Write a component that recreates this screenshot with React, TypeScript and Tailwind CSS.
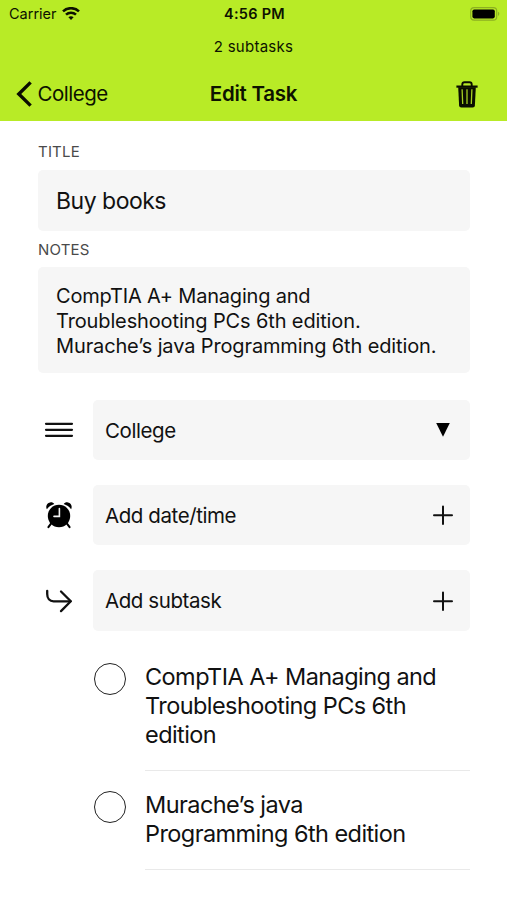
import { useState, type ReactNode } from "react";

type Subtask = { id: number; lines: string[]; done: boolean };

const initialSubtasks: Subtask[] = [
  { id: 1, lines: ["CompTIA A+ Managing and", "Troubleshooting PCs 6th", "edition"], done: false },
  { id: 2, lines: ["Murache’s java", "Programming 6th edition"], done: false },
];

function WifiIcon() {
  return (
    <svg width="18" height="14" viewBox="0 0 18 14" fill="none" stroke="#0d1200" strokeWidth="2.5">
      <path d="M1 4.3C5.4 0.1 12.6 0.1 17 4.3" />
      <path d="M4 7.7C6.8 5 11.2 5 14 7.7" />
      <path d="M9 13L6.4 10.3C7.8 9 10.2 9 11.6 10.3Z" fill="#0d1200" stroke="none" />
    </svg>
  );
}

function BatteryIcon() {
  return (
    <svg width="30" height="14" viewBox="0 0 30 14" fill="none">
      <rect x="0.7" y="0.7" width="26" height="12.4" rx="3.4" stroke="#8cb022" strokeWidth="1.2" />
      <rect x="2.4" y="2.4" width="22.4" height="9" rx="1.8" fill="#000" />
      <path d="M28 4.8C29.8 5.5 29.8 8.3 28 9Z" fill="#8cb022" />
    </svg>
  );
}

function BackIcon() {
  return (
    <svg width="16" height="26" viewBox="0 0 16 26" fill="none" stroke="#0a0d00" strokeWidth="3.4">
      <path d="M14.6 1.4L2.8 13L14.6 24.6" />
    </svg>
  );
}

function TrashIcon() {
  return (
    <svg width="22" height="27" viewBox="0 0 22 27" fill="none" stroke="#0a0d00">
      <path d="M6.3 5.4V3.4C6.3 1.8 7.1 1.2 8.5 1.2H13.5C14.9 1.2 15.7 1.8 15.7 3.4V5.4" strokeWidth="1.9" />
      <path d="M0.4 5.6H21.6" strokeWidth="2.2" />
      <path d="M2.2 6.3H19.8L18.9 24.2C18.8 25.7 18 26.4 16.6 26.4H5.4C4 26.4 3.2 25.7 3.1 24.2Z" fill="#0a0d00" stroke="none" />
      <path d="M6.1 8.2L6.7 23M11 8.2V23M15.9 8.2L15.3 23" stroke="#a5d022" strokeWidth="1.3" />
    </svg>
  );
}

function MenuIcon() {
  return (
    <svg width="30" height="18" viewBox="0 0 30 18" stroke="#111" strokeWidth="2.2" strokeLinecap="round">
      <path d="M2 2.8H28M2 8.8H28M2 14.8H28" />
    </svg>
  );
}

function AlarmIcon() {
  return (
    <svg width="28" height="28" viewBox="0 0 28 28" fill="none">
      <circle cx="14" cy="15" r="11.2" fill="#000" />
      <path d="M1.9 8.2C0.3 5.3 2 1.8 5.2 1.4C7 1.2 8.5 1.9 9.3 3C6.2 4 3.6 5.8 1.9 8.2Z" fill="#000" />
      <path d="M26.1 8.2C27.7 5.3 26 1.8 22.8 1.4C21 1.2 19.5 1.9 18.7 3C21.8 4 24.4 5.8 26.1 8.2Z" fill="#000" />
      <path d="M6.2 22.3L3.4 26.2M21.8 22.3L24.6 26.2" stroke="#000" strokeWidth="2" strokeLinecap="round" />
      <path d="M14.4 7.6V15.4H9" stroke="#f4f4f4" strokeWidth="1.6" strokeLinecap="round" />
    </svg>
  );
}

function SubtaskIcon() {
  return (
    <svg width="28" height="24" viewBox="0 0 28 24" fill="none" stroke="#111" strokeWidth="2.3" strokeLinecap="round" strokeLinejoin="round">
      <path d="M2.2 1.8V5C2.2 9.2 4.6 12.3 8.6 12.3H25.6" />
      <path d="M16 2.5L25.8 12.3L16 22.1" />
    </svg>
  );
}

function PlusIcon() {
  return (
    <svg width="20" height="20" viewBox="0 0 20 20" stroke="#111" strokeWidth="2" strokeLinecap="round">
      <path d="M10 1.4V19M1 10.2H19" />
    </svg>
  );
}

function CaretIcon() {
  return (
    <svg width="20" height="20" viewBox="0 0 20 20">
      <path d="M3.2 3H16.8L10 16.8Z" fill="#000" />
    </svg>
  );
}

function ActionRow({ icon, label, action, className = "h-[60px]" }: { icon: ReactNode; label: string; action: ReactNode; className?: string }) {
  return (
    <div className="flex items-center">
      <div className="flex w-[55px] pl-[6px] items-center">
        <div className="flex w-[30px] justify-center">{icon}</div>
      </div>
      <button className={`flex flex-1 items-center justify-between rounded-[5px] bg-[#f6f6f6] pl-3 pr-[17px] text-[20.5px] tracking-[-0.42px] ${className}`}>
        <span className="pt-[2px]">{label}</span>
        {action}
      </button>
    </div>
  );
}

export default function App() {
  const [title, setTitle] = useState("Buy books");
  const [subtasks, setSubtasks] = useState(initialSubtasks);

  const toggle = (id: number) =>
    setSubtasks((list) => list.map((s) => (s.id === id ? { ...s, done: !s.done } : s)));

  return (
    <div className="h-[900px] w-[507px] overflow-hidden bg-white font-['Inter','Liberation_Sans',sans-serif] text-[#111]">
      <header className="h-[121px] bg-[#b8eb26] text-[#0d1200]">
        <div className="grid h-[27px] grid-cols-3 items-center pl-[9px] pr-[7px]">
          <div className="flex items-center gap-[5px] text-[14.5px]">
            <span>Carrier</span>
            <WifiIcon />
          </div>
          <div className="text-center text-[14.5px] font-semibold tracking-[0.25px]">4:56 PM</div>
          <div className="flex justify-end">
            <BatteryIcon />
          </div>
        </div>
        <div className="h-[40px] text-center text-[15px] leading-[40px] tracking-[0.25px]">{subtasks.length} subtasks</div>
        <div className="grid h-[54px] grid-cols-3 items-center pl-4 pr-[29px]">
          <button className="flex items-center gap-[5.5px] text-[20.5px] tracking-[-0.5px]">
            <BackIcon />
            <span>College</span>
          </button>
          <h1 className="pl-[13px] text-center text-[20.5px] font-semibold tracking-[-0.25px]">Edit Task</h1>
          <button className="flex justify-end" aria-label="Delete task">
            <TrashIcon />
          </button>
        </div>
      </header>

      <main className="pl-[38px] pr-[37px]">
        <label className="block h-[49px] pt-[21px] text-[15px] leading-[20px] tracking-[0.2px] text-[#4a4a4a]">TITLE</label>
        <input
          value={title}
          onChange={(e) => setTitle(e.target.value)}
          className="block h-[61px] w-full rounded-[5px] bg-[#f6f6f6] px-[18px] text-[23px] tracking-[-0.5px] outline-none"
        />
        <div className="h-[36px] pt-[9px] text-[15px] leading-[20px] tracking-[0.2px] text-[#4a4a4a]">NOTES</div>
        <div className="h-[106px] whitespace-nowrap rounded-[5px] bg-[#f6f6f6] pl-[18px] pt-[17px] text-[20px] leading-[24.9px] tracking-[-0.13px]">
          <p className="tracking-[-0.2px]">CompTIA A+ Managing and</p>
          <p>Troubleshooting PCs 6th edition.</p>
          <p>Murache’s java Programming 6th edition.</p>
        </div>

        <div className="mt-[27px] flex flex-col gap-[25px]">
          <ActionRow icon={<MenuIcon />} label="College" action={<CaretIcon />} />
          <ActionRow icon={<AlarmIcon />} label="Add date/time" action={<PlusIcon />} />
          <ActionRow icon={<SubtaskIcon />} label="Add subtask" action={<PlusIcon />} className="h-[61px]" />
        </div>

        <ul className="pl-[56px] pt-[31px]">
          {subtasks.map((s) => (
            <li key={s.id} className="mb-[19px] flex gap-[19px]">
              <button
                onClick={() => toggle(s.id)}
                aria-label="Toggle subtask"
                className={`mt-px size-8 shrink-0 rounded-full border-[1.5px] border-[#222] ${s.done ? "bg-[#b8eb26]" : ""}`}
              />
              <div className="flex-1 whitespace-nowrap border-b border-[#e9e9e9] pb-[21px] text-[23.5px] leading-[29px] tracking-[-0.57px]">
                {s.lines.map((line) => (
                  <p key={line}>{line}</p>
                ))}
              </div>
            </li>
          ))}
        </ul>
      </main>
    </div>
  );
}
